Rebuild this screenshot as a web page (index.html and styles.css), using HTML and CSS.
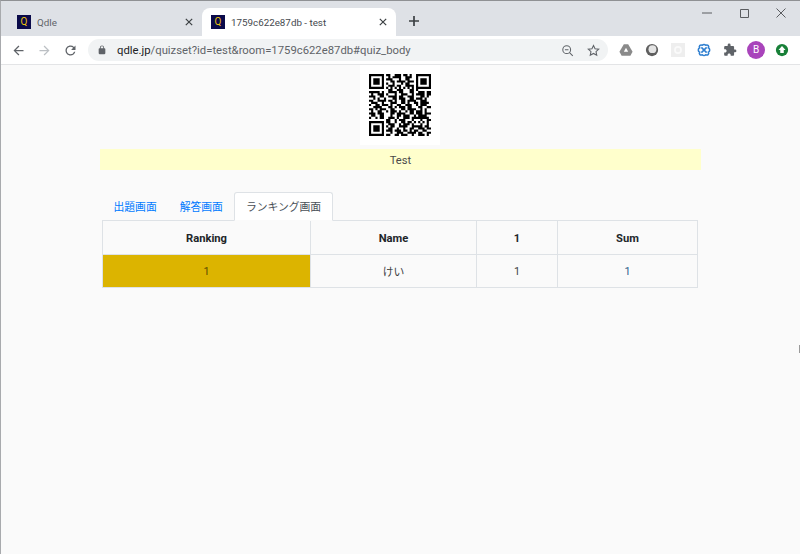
FILE: index.html
```html
<!DOCTYPE html>
<html lang="ja">
<head>
  <meta charset="UTF-8">
  <title>1759c622e87db - test</title>
  <link rel="stylesheet" href="styles.css">
</head>
<body>
  <div class="window">
    <div class="tabstrip">
      <div class="tab">
        <span class="favicon">Q</span>
        <span class="tab-title">Qdle</span>
        <svg class="tab-close" viewBox="0 0 10 10"><path d="M1 1l8 8M9 1l-8 8"/></svg>
      </div>
      <div class="tab tab-active">
        <span class="favicon">Q</span>
        <span class="tab-title">1759c622e87db - test</span>
        <svg class="tab-close" viewBox="0 0 10 10"><path d="M1 1l8 8M9 1l-8 8"/></svg>
      </div>
      <svg class="new-tab" viewBox="0 0 10 10"><path d="M5 0v10M0 5h10"/></svg>
      <div class="win-controls">
        <svg viewBox="0 0 10 10"><path d="M0 5h10"/></svg>
        <svg viewBox="0 0 10 10"><path d="M1.500 1.500h8v8h-8z"/></svg>
        <svg viewBox="0 0 10 10"><path d="M.5 .5l9 9M9.500 .5l-9 9"/></svg>
      </div>
    </div>

    <div class="toolbar">
      <svg class="nav-icon" viewBox="0 0 24 24"><path d="M20 11H7.830l5.590-5.590L12 4l-8 8 8 8 1.410-1.410L7.830 13H20v-2z"/></svg>
      <svg class="nav-icon nav-off" viewBox="0 0 24 24"><path d="M4 11h12.170l-5.590-5.590L12 4l8 8-8 8-1.410-1.410L16.170 13H4v-2z"/></svg>
      <svg class="nav-icon nav-last" viewBox="0 0 24 24"><path d="M17.650 6.350A7.958 7.958 0 0 0 12 4c-4.420 0-7.990 3.580-7.990 8s3.570 8 7.990 8c3.730 0 6.840-2.550 7.730-6h-2.080A5.990 5.990 0 0 1 12 18c-3.310 0-6-2.690-6-6s2.690-6 6-6c1.660 0 3.140.69 4.220 1.780L13 11h7V4l-2.350 2.350z"/></svg>
      <div class="omnibox">
        <svg class="lock" viewBox="0 0 24 24"><path d="M18 8h-1V6A5 5 0 0 0 7 6v2H6a2 2 0 0 0-2 2v10c0 1.100.9 2 2 2h12a2 2 0 0 0 2-2V10a2 2 0 0 0-2-2zM9 6a3 3 0 0 1 6 0v2H9V6z"/></svg>
        <span class="url"><b>qdle.jp</b>/quizset?id=test&amp;room=1759c622e87db#quiz_body</span>
        <svg class="omni-icon" viewBox="0 0 16 16"><circle cx="7" cy="7" r="4.800"/><path d="M4.800 7h4.400M10.500 10.500l4 4"/></svg>
        <svg class="omni-icon" viewBox="0 0 16 16"><path d="M8 1.800l1.900 4.100 4.500.5-3.300 3 .9 4.500L8 11.600l-4 2.300.9-4.500-3.300-3 4.500-.5z"/></svg>
      </div>
      <div class="extensions">
        <svg viewBox="0 0 16 16"><path fill="#8a8a8a" d="M5.500 1.500h5L15.500 10l-2.500 4.500H3L.5 10z"/><path fill="#fff" d="M8 5.500L10.500 10h-5z"/></svg>
        <svg viewBox="0 0 16 16"><circle cx="8" cy="8" r="7" fill="#5f5f5f"/><circle cx="8.500" cy="7" r="4.500" fill="#e4e4e4"/></svg>
        <svg viewBox="0 0 16 16"><rect x="0" y="0" width="16" height="16" fill="#eeeeee"/><circle cx="8" cy="8" r="3.500" fill="none" stroke="#fafafa" stroke-width="2"/></svg>
        <svg viewBox="0 0 16 16" fill="none" stroke="#2f7fd0" stroke-width="1.800"><path d="M6 2.500C3.500 1.500 2 3.500 3 5.500 1 6.500 1 9.500 3 10.500 2 12.500 3.500 14.500 6 13.500 7 14.500 9 14.500 10 13.500 12.500 14.500 14 12.500 13 10.500 15 9.500 15 6.500 13 5.500 14 3.500 12.500 1.500 10 2.500 9 1.500 7 1.500 6 2.500z"/><path d="M5 5l6 6M11 5l-6 6"/></svg>
        <svg viewBox="0 0 24 24"><path fill="#5f6368" d="M20.500 11H19V7c0-1.100-.9-2-2-2h-4V3.500a2.500 2.500 0 0 0-5 0V5H4c-1.100 0-1.990.9-1.990 2v3.800H3.500c1.490 0 2.700 1.210 2.700 2.700s-1.210 2.700-2.700 2.700H2V20c0 1.100.9 2 2 2h3.800v-1.500c0-1.490 1.210-2.700 2.700-2.700 1.490 0 2.700 1.210 2.700 2.700V22H17c1.100 0 2-.9 2-2v-4h1.500a2.500 2.500 0 0 0 0-5z"/></svg>
        <span class="avatar">B</span>
        <svg viewBox="0 0 16 16"><circle cx="8" cy="8" r="7" fill="#188038"/><path fill="#fff" d="M8 3.500L12 8H10v3.500H6V8H4z"/></svg>
      </div>
    </div>

    <div class="page">
      <div class="qr-box">
        <svg class="qr" viewBox="0 0 29 29"><path d="M0 .5h7m1 0h2m2 0h3m1 0h2m1 0h1m2 0h7M0 1.500h1m5 0h1m2 0h1m1 0h4m2 0h3m2 0h1m5 0h1M0 2.500h1m1 0h3m1 0h1m1 0h3m3 0h1m2 0h2m3 0h1m1 0h3m1 0h1M0 3.500h1m1 0h3m1 0h1m3 0h2m1 0h4m1 0h3m1 0h1m1 0h3m1 0h1M0 4.500h1m1 0h3m1 0h1m1 0h1m2 0h1m3 0h1m1 0h2m3 0h1m1 0h3m1 0h1M0 5.500h1m5 0h1m2 0h3m1 0h2m2 0h4m1 0h1m5 0h1M0 6.500h7m1 0h1m1 0h1m1 0h1m1 0h1m1 0h1m1 0h1m1 0h1m1 0h7M9 7.500h2m2 0h3m3 0h2m1 0h1M0 8.500h5m1 0h1m2 0h4m1 0h2m3 0h2m2 0h3m1 0h2M1 9.500h1m2 0h3m1 0h1m3 0h1m2 0h3m2 0h1m1 0h4m1 0h2M0 10.500h3m2 0h2m2 0h4m1 0h2m2 0h3m3 0h2m1 0h1M2 11.500h1m1 0h1m2 0h1m3 0h2m1 0h3m2 0h2m1 0h3m1 0h1M0 12.500h2m2 0h4m1 0h2m1 0h1m2 0h2m1 0h4m2 0h3M1 13.500h3m2 0h1m3 0h3m2 0h2m1 0h1m2 0h2m1 0h4M0 14.500h1m2 0h2m1 0h3m1 0h1m2 0h2m2 0h3m2 0h1m1 0h3M2 15.500h4m3 0h2m1 0h1m1 0h3m1 0h2m3 0h2m2 0h2M0 16.500h2m1 0h1m1 0h3m2 0h2m3 0h2m1 0h4m2 0h1m1 0h1M1 17.500h1m2 0h2m2 0h1m1 0h3m1 0h1m2 0h1m1 0h2m1 0h3m1 0h1M0 18.500h3m1 0h3m3 0h2m1 0h4m2 0h2m1 0h3m1 0h3M1 19.500h2m2 0h2m3 0h1m2 0h2m1 0h3m2 0h1m1 0h4m2 0h1M0 20.500h1m2 0h1m1 0h2m2 0h3m1 0h1m2 0h3m1 0h8M8 21.500h2m2 0h1m1 0h3m3 0h1m3 0h1m2 0h2M0 22.500h7m1 0h2m2 0h1m2 0h2m1 0h2m1 0h1m1 0h1m1 0h1m1 0h1M0 23.500h1m5 0h1m2 0h3m2 0h1m1 0h3m1 0h1m3 0h1m2 0h1M0 24.500h1m1 0h3m1 0h1m1 0h1m1 0h2m2 0h4m2 0h5m1 0h2M0 25.500h1m1 0h3m1 0h1m2 0h2m2 0h1m2 0h1m2 0h2m2 0h3m1 0h2M0 26.500h1m1 0h3m1 0h1m1 0h3m1 0h3m1 0h2m1 0h1m1 0h2m2 0h2M0 27.500h1m5 0h1m3 0h1m2 0h3m2 0h4m1 0h2m2 0h2M0 28.500h7m1 0h2m2 0h2m1 0h3m2 0h1m2 0h3m1 0h1"/></svg>
      </div>
      <div class="quiz-name">Test</div>

      <ul class="nav-tabs">
        <li><a class="nav-link" href="#">出題画面</a></li>
        <li><a class="nav-link" href="#">解答画面</a></li>
        <li><a class="nav-link active" href="#">ランキング画面</a></li>
      </ul>

      <table class="ranking">
        <thead>
          <tr>
            <th class="col-rank">Ranking</th>
            <th class="col-name">Name</th>
            <th class="col-q">1</th>
            <th>Sum</th>
          </tr>
        </thead>
        <tbody>
          <tr>
            <td class="gold">1</td>
            <td>けい</td>
            <td>1</td>
            <td class="sum">1</td>
          </tr>
        </tbody>
      </table>
    </div>
  </div>
  <div class="edge-mark"></div>
</body>
</html>
```

FILE: styles.css
```css
* {
  box-sizing: border-box;
}
html, body {
  margin: 0;
  height: 100%;
  overflow: hidden;
}
body {
  font-family: Roboto, "Noto Sans CJK JP", sans-serif;
  color: #212529;
}
.window {
  display: flex;
  flex-direction: column;
  height: 554px;
  border-top: 1px solid #8f9194;
  border-left: 1px solid #a8aaad;
  background: #fafafa;
}
.edge-mark {
  position: absolute;
  top: 345px;
  right: 0;
  width: 1px;
  height: 8px;
  background: #9a9a9a;
}

/* browser chrome */
.tabstrip {
  display: flex;
  align-items: flex-end;
  height: 35px;
  padding-left: 7px;
  background: #dee1e6;
}
.tab {
  display: flex;
  align-items: center;
  width: 194px;
  height: 28px;
  padding: 0 7px 0 9px;
  font-size: 9.8px;
  color: #5f6368;
}
.tab-active {
  border-radius: 8px 8px 0 0;
  background: #fff;
  color: #45494e;
}
.favicon {
  flex: none;
  width: 14px;
  height: 14px;
  margin-right: 6px;
  background: #0a0a4a;
  color: #e8c010;
  font-size: 10px;
  line-height: 14px;
  text-align: center;
}
.tab-title {
  flex: 1;
  white-space: nowrap;
}
.tab-close {
  flex: none;
  width: 8px;
  height: 8px;
  margin-right: 2px;
  fill: none;
  stroke: #3c4043;
  stroke-width: 1.500;
}
.new-tab {
  width: 10px;
  height: 10px;
  margin: 0 0 10px 13px;
  fill: none;
  stroke: #3c4043;
  stroke-width: 1.700;
}
.win-controls {
  display: flex;
  gap: 27px;
  align-self: flex-start;
  margin: 7px 14px 0 auto;
}
.win-controls svg {
  width: 10px;
  height: 10px;
  fill: none;
  stroke: #5a5c60;
  stroke-width: 1;
}
.toolbar {
  display: flex;
  align-items: center;
  height: 29px;
  padding-left: 10px;
  border-bottom: 1px solid #e3e4e6;
  background: #fff;
}
.nav-icon {
  flex: none;
  width: 15px;
  height: 15px;
  margin-right: 11px;
  fill: #5f6368;
}
.nav-off {
  fill: #bcc0c4;
}
.nav-last {
  margin-right: 10px;
}
.omnibox {
  display: flex;
  align-items: center;
  width: 520px;
  height: 22px;
  padding: 0 8px 0 9px;
  border-radius: 11px;
  background: #f1f3f4;
}
.lock {
  flex: none;
  width: 10px;
  height: 10px;
  margin-right: 10px;
  fill: #5f6368;
}
.url {
  flex: 1;
  font-size: 11.3px;
  color: #5f6368;
  white-space: nowrap;
}
.url b {
  font-weight: 400;
  color: #202124;
}
.omni-icon {
  flex: none;
  width: 13px;
  height: 13px;
  margin-left: 13px;
  fill: none;
  stroke: #5f6368;
  stroke-width: 1.300;
}
.extensions {
  display: flex;
  align-items: center;
  gap: 12px;
  margin-left: 11px;
}
.extensions svg {
  width: 14px;
  height: 14px;
}
.avatar {
  width: 18px;
  height: 18px;
  margin: 0 -2px;
  border-radius: 50%;
  background: #a944bb;
  color: #fff;
  font-size: 10px;
  line-height: 18px;
  text-align: center;
}

/* page */
.page {
  width: 600px;
  margin-left: 99px;
  font-size: 10.8px;
}
.qr-box {
  display: flex;
  align-items: center;
  justify-content: center;
  width: 80px;
  height: 80px;
  margin: 0 auto 4px;
  background: #fff;
}
.qr {
  width: 62px;
  height: 62px;
  fill: none;
  stroke: #000;
  stroke-width: 1;
}
.quiz-name {
  height: 21px;
  margin-right: -1px;
  background: #ffffcc;
  color: #4a4a4a;
  font-size: 11.2px;
  line-height: 23px;
  text-align: center;
}
.nav-tabs {
  display: flex;
  margin: 22px 2px 0;
  padding: 0;
  list-style: none;
}
.nav-link {
  display: block;
  height: 29px;
  margin-bottom: -1px;
  padding: 0 10.500px;
  border: 1px solid transparent;
  border-radius: 3px 3px 0 0;
  color: #007bff;
  line-height: 29px;
  text-decoration: none;
}
.nav-link.active {
  position: relative;
  border-color: #dee2e6 #dee2e6 #fafafa;
  background: #fff;
  color: #495057;
}
.ranking {
  width: 596px;
  margin: 0 2px;
  border-collapse: collapse;
  table-layout: fixed;
}
.ranking th, .ranking td {
  padding: 0;
  border: 1px solid #dee2e6;
  text-align: center;
  vertical-align: middle;
}
.ranking th {
  height: 34px;
  padding-top: 2px;
  font-size: 11.2px;
  font-weight: 700;
}
.ranking td {
  height: 33px;
  color: #3c3f42;
}
.col-rank {
  width: 208px;
}
.col-name {
  width: 166px;
}
.col-q {
  width: 81px;
}
.ranking td.gold {
  background: #dcb400;
  color: #5a4a00;
}
.ranking td.sum {
  color: #2a5a8a;
}
```
